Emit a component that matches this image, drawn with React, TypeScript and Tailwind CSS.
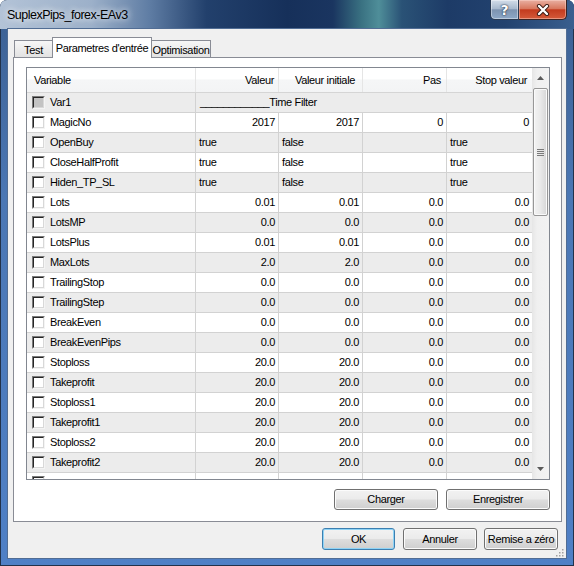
import React from "react";

const F = "font-['Liberation_Sans',Arial,sans-serif]";

type Row = { name: string; gray?: boolean; span?: string; v?: string[]; left?: boolean };

const Z = ["0.0", "0.0", "0.0", "0.0"];
const T = ["20.0", "20.0", "0.0", "0.0"];
const B = ["true", "false", "", "true"];

const rows: Row[] = [
  { name: "Var1", gray: true, span: "____________Time Filter" },
  { name: "MagicNo", v: ["2017", "2017", "0", "0"] },
  { name: "OpenBuy", v: B, left: true },
  { name: "CloseHalfProfit", v: B, left: true },
  { name: "Hiden_TP_SL", v: B, left: true },
  { name: "Lots", v: ["0.01", "0.01", "0.0", "0.0"] },
  { name: "LotsMP", v: Z },
  { name: "LotsPlus", v: ["0.01", "0.01", "0.0", "0.0"] },
  { name: "MaxLots", v: ["2.0", "2.0", "0.0", "0.0"] },
  { name: "TrailingStop", v: Z },
  { name: "TrailingStep", v: Z },
  { name: "BreakEven", v: Z },
  { name: "BreakEvenPips", v: Z },
  { name: "Stoploss", v: T },
  { name: "Takeprofit", v: T },
  { name: "Stoploss1", v: T },
  { name: "Takeprofit1", v: T },
  { name: "Stoploss2", v: T },
  { name: "Takeprofit2", v: T },
  { name: "", v: ["", "", "", ""] },
];

const widths = ["w-[83px]", "w-[84px]", "w-[84px]", "w-[85px]"];

function Checkbox({ gray }: { gray?: boolean }) {
  return (
    <span className="flex h-[13px] w-[13px] shrink-0 border border-t-[#7a7a7a] border-l-[#7a7a7a] border-r-[#f4f4f4] border-b-[#f4f4f4]">
      <span
        className={`block h-full w-full border border-t-[#262626] border-l-[#262626] border-r-[#d8d8d8] border-b-[#d8d8d8] ${
          gray ? "bg-[#c3c3c3]" : "bg-white"
        }`}
      />
    </span>
  );
}

function GridRow({ r, i }: { r: Row; i: number }) {
  const bg = i % 2 === 0 ? "bg-[#ececec]" : "bg-white";
  return (
    <div className={`flex h-[20px] shrink-0 border-b border-[#d2d2d2] ${bg}`}>
      <div className="flex w-[169px] shrink-0 items-center border-r border-[#d2d2d2] pl-[5px]">
        <Checkbox gray={r.gray} />
        <span className="ml-[5px] whitespace-nowrap">{r.name}</span>
      </div>
      {r.span ? (
        <div className="flex flex-1 items-center whitespace-nowrap pl-[4px]">{r.span}</div>
      ) : (
        (r.v ?? []).map((c, k) => (
          <div
            key={k}
            className={`flex shrink-0 items-center ${widths[k]} ${k < 3 ? "border-r border-[#d2d2d2]" : ""} ${
              r.left ? "justify-start pl-[3px]" : "justify-end pr-[3px]"
            }`}
          >
            {c}
          </div>
        ))
      )}
    </div>
  );
}

function Btn({ label, w, h, def }: { label: string; w: string; h: string; def?: boolean }) {
  return (
    <div
      className={`flex ${w} ${h} items-center justify-center whitespace-nowrap rounded-[3px] border ${
        def
          ? "border-[#3c7fb1] shadow-[inset_0_0_0_1px_#8fd3f5]"
          : "border-[#707070] shadow-[inset_0_0_0_1px_#fbfbfb]"
      } bg-[linear-gradient(180deg,#f2f2f2_0%,#ebebeb_48%,#dddddd_52%,#cfcfcf_100%)] text-[11px] text-black`}
    >
      {label}
    </div>
  );
}

export default function App() {
  return (
    <div
      className={`${F} relative h-[566px] w-[574px] overflow-hidden rounded-t-[7px] bg-[linear-gradient(180deg,#3b5f91_0%,#4b77b4_35%,#4f80c6_100%)] shadow-[inset_0_0_0_1px_#22324a]`}
    >
      {/* title bar */}
      <div className="flex h-[29px] justify-between bg-[linear-gradient(90deg,#b3c3d7_0%,#9cb0c9_16%,#5f7da4_26%,#22406c_36%,#16305a_50%,#1a3560_58%,#3a7282_63%,#4f8e99_66%,#2a5276_70%,#1d3b67_78%,#22426f_88%,#3a5f8f_100%)] pr-[7px]">
        <div className="pl-[7px] pt-[8px] text-[12.5px] leading-[15px] tracking-[-0.5px] text-black [text-shadow:0_0_6px_rgba(255,255,255,0.9),0_0_10px_rgba(255,255,255,0.6)]">
          SuplexPips_forex-EAv3
        </div>
        <div className="flex h-[20px]">
          <div className="flex w-[29px] items-center justify-center rounded-bl-[5px] border border-t-0 border-[#2a3a52] bg-[linear-gradient(180deg,#d3dde9_0%,#a9bace_45%,#7d93b0_52%,#8ea8c7_100%)] shadow-[inset_0_0_0_1px_rgba(255,255,255,0.4)]">
            <span className="font-['DejaVu_Sans',sans-serif] text-[14px] font-bold leading-none text-white [text-shadow:0_0_1px_#1d2b40,0_0_2px_#1d2b40]">
              ?
            </span>
          </div>
          <div className="flex w-[48px] items-center justify-center rounded-br-[5px] border border-t-0 border-l-0 border-[#3a2424] bg-[linear-gradient(180deg,#e9b0a2_0%,#d8785f_45%,#c33b1e_52%,#d45a3a_100%)] shadow-[inset_0_0_0_1px_rgba(255,220,210,0.45)]">
            <svg width="14" height="12" viewBox="0 0 14 12">
              <path d="M3 2 L11 10 M11 2 L3 10" stroke="#3a1a14" strokeWidth="4.2" strokeLinecap="round" />
              <path d="M3 2 L11 10 M11 2 L3 10" stroke="#ffffff" strokeWidth="2.4" strokeLinecap="round" />
            </svg>
          </div>
        </div>
      </div>

      {/* client area */}
      <div className="relative mx-[8px] flex h-[529px] flex-col bg-[#f0f0f0] pt-[8px] text-[11px] tracking-[-0.35px] text-black shadow-[0_0_0_1px_#516d94]">
        {/* tabs */}
        <div className="flex h-[20px] items-end pl-[6px]">
          <div className="flex h-[17px] w-[39px] items-center justify-center border border-b-0 border-[#898c95] bg-[linear-gradient(180deg,#f6f6f6_0%,#ececec_50%,#e2e2e2_100%)] pt-[2px]">
            Test
          </div>
          <div className="relative z-10 -mb-[1px] ml-[-1px] flex h-[21px] w-[100px] items-center justify-center border border-b-0 border-[#898c95] bg-white">
            Parametres d'entrée
          </div>
          <div className="ml-[-1px] flex h-[17px] w-[60px] items-center justify-center border border-b-0 border-[#898c95] bg-[linear-gradient(180deg,#f6f6f6_0%,#ececec_50%,#e2e2e2_100%)] pt-[2px]">
            Optimisation
          </div>
        </div>

        {/* panel */}
        <div className="ml-[5px] flex h-[465px] w-[549px] flex-col border border-[#898c95] bg-white pl-[12px] pr-[11px] pt-[9px]">
          {/* grid */}
          <div className="flex h-[413px] w-[524px] border border-[#828790] bg-white">
            <div className="flex h-full w-[505px] flex-col overflow-hidden">
              {/* header */}
              <div className="flex h-[25px] shrink-0 border-b border-[#d5d5d5] bg-[linear-gradient(180deg,#ffffff_0%,#ffffff_45%,#f5f6f7_50%,#f3f4f5_100%)]">
                <div className="flex w-[169px] items-center border-r border-[#e5e5e5] pl-[7px]">Variable</div>
                <div className="flex w-[83px] items-center justify-end border-r border-[#e5e5e5] pr-[4px]">Valeur</div>
                <div className="flex w-[84px] items-center justify-end border-r border-[#e5e5e5] pr-[7px]">Valeur initiale</div>
                <div className="flex w-[84px] items-center justify-end border-r border-[#e5e5e5] pr-[5px]">Pas</div>
                <div className="flex w-[85px] items-center justify-end pr-[5px]">Stop valeur</div>
              </div>
              {rows.map((r, i) => (
                <GridRow key={i} r={r} i={i} />
              ))}
            </div>
            {/* scrollbar */}
            <div className="flex h-full w-[17px] flex-col bg-[linear-gradient(90deg,#e6e6e6_0%,#f0f0f0_30%,#f2f2f2_100%)]">
              <div className="flex h-[20px] shrink-0 items-center justify-center">
                <svg width="7" height="4" viewBox="0 0 7 4">
                  <path d="M0 4 L3.5 0 L7 4 Z" fill="#5a5a5a" />
                </svg>
              </div>
              <div className="mx-[1px] flex h-[128px] shrink-0 flex-col items-center justify-center gap-[1px] rounded-[2px] border border-[#979797] bg-[linear-gradient(90deg,#f3f3f3_0%,#e9e9e9_50%,#d6d6d6_100%)] shadow-[inset_0_0_0_1px_#fafafa]">
                <span className="block h-[1px] w-[7px] bg-[#7a7a7a]" />
                <span className="block h-[1px] w-[7px] bg-[#7a7a7a]" />
                <span className="block h-[1px] w-[7px] bg-[#7a7a7a]" />
                <span className="block h-[1px] w-[7px] bg-[#7a7a7a]" />
              </div>
              <div className="flex-1" />
              <div className="flex h-[20px] shrink-0 items-center justify-center">
                <svg width="7" height="4" viewBox="0 0 7 4">
                  <path d="M0 0 L3.5 4 L7 0 Z" fill="#5a5a5a" />
                </svg>
              </div>
            </div>
          </div>

          {/* load / save */}
          <div className="mt-[9px] flex justify-end gap-[8px]">
            <Btn label="Charger" w="w-[104px]" h="h-[21px]" />
            <Btn label="Enregistrer" w="w-[104px]" h="h-[21px]" />
          </div>
        </div>

        {/* dialog buttons */}
        <div className="mt-[6px] flex justify-end pr-[8px]">
          <Btn label="OK" w="w-[73px]" h="h-[22px]" def />
          <div className="ml-[8px]">
            <Btn label="Annuler" w="w-[74px]" h="h-[22px]" />
          </div>
          <div className="ml-[7px]">
            <Btn label="Remise a zéro" w="w-[74px]" h="h-[22px]" />
          </div>
        </div>

        {/* resize grip */}
        <svg className="absolute bottom-[1px] right-[2px]" width="9" height="9" viewBox="0 0 9 9">
          {[
            [7, 1],
            [7, 4],
            [4, 4],
            [7, 7],
            [4, 7],
            [1, 7],
          ].map(([x, y], k) => (
            <rect key={k} x={x} y={y} width="1.5" height="1.5" fill="#a0a0a0" />
          ))}
        </svg>
      </div>
    </div>
  );
}
